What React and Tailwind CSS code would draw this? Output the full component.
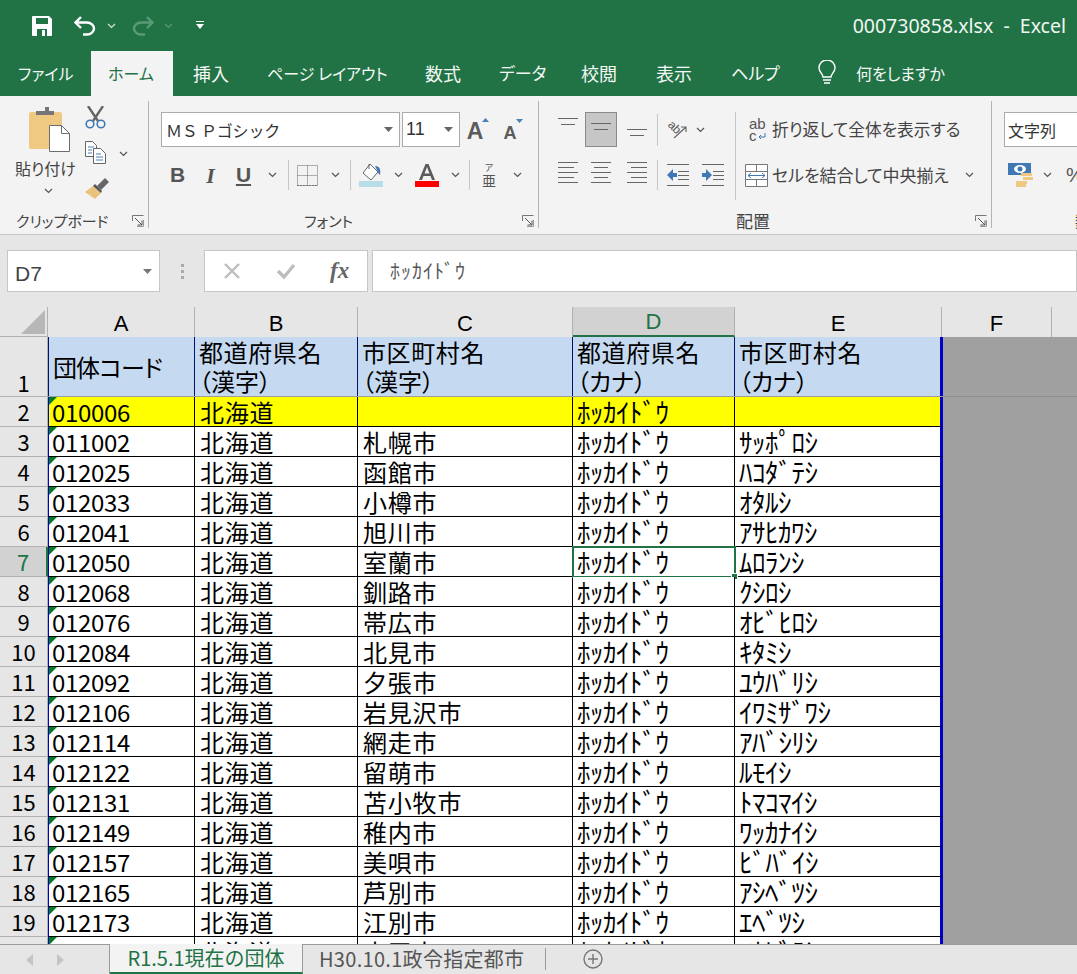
import React from "react";

const rows = [
  ["010006", "", ""],
  ["011002", "札幌市", "ｻｯﾎﾟﾛｼ"],
  ["012025", "函館市", "ﾊｺﾀﾞﾃｼ"],
  ["012033", "小樽市", "ｵﾀﾙｼ"],
  ["012041", "旭川市", "ｱｻﾋｶﾜｼ"],
  ["012050", "室蘭市", "ﾑﾛﾗﾝｼ"],
  ["012068", "釧路市", "ｸｼﾛｼ"],
  ["012076", "帯広市", "ｵﾋﾞﾋﾛｼ"],
  ["012084", "北見市", "ｷﾀﾐｼ"],
  ["012092", "夕張市", "ﾕｳﾊﾞﾘｼ"],
  ["012106", "岩見沢市", "ｲﾜﾐｻﾞﾜｼ"],
  ["012114", "網走市", "ｱﾊﾞｼﾘｼ"],
  ["012122", "留萌市", "ﾙﾓｲｼ"],
  ["012131", "苫小牧市", "ﾄﾏｺﾏｲｼ"],
  ["012149", "稚内市", "ﾜｯｶﾅｲｼ"],
  ["012157", "美唄市", "ﾋﾞﾊﾞｲｼ"],
  ["012165", "芦別市", "ｱｼﾍﾞﾂｼ"],
  ["012173", "江別市", "ｴﾍﾞﾂｼ"],
  ["012181", "赤平市", "ｱｶﾋﾞﾗｼ"],
];

const Chev = ({ className = "", color = "#555" }) => (
  <svg width="9" height="6" viewBox="0 0 9 6" className={className}>
    <path d="M1 1l3.5 3.5L8 1" fill="none" stroke={color} strokeWidth="1.2" />
  </svg>
);

const Launcher = () => (
  <svg width="12" height="12" viewBox="0 0 12 12">
    <path d="M.5 6V.5H11.500" fill="none" stroke="#777" />
    <path d="M3 3l7 7M10 5.500V10H5.500" fill="none" stroke="#555" />
    <path d="M11.500 5v6.500H5" fill="none" stroke="#999" />
  </svg>
);

const Sep = ({ className = "" }) => <div className={"w-px shrink-0 bg-[#c6c6c6] " + className} />;

const Lines = ({ widths, gap = 5, w = 20 }) => (
  <svg width={w} height={widths.length * gap + 1} viewBox={"0 0 " + w + " " + (widths.length * gap + 1)}>
    {widths.map(([a, b], i) => (
      <path key={i} d={"M" + a + " " + (i * gap + 0.5) + "H" + b} stroke="#666" />
    ))}
  </svg>
);

const Paste = () => (
  <svg width="42" height="46" viewBox="0 0 42 46">
    <rect x="0" y="5" width="33" height="37" rx="2" fill="#efc981" />
    <path d="M7 8V4h9V0h4v4h5v4z" fill="#767676" />
    <path d="M20.500 18.500h12l8 8v18h-20z" fill="#fff" stroke="#6d6d6d" />
    <path d="M32.500 18.500v8h8" fill="none" stroke="#6d6d6d" />
  </svg>
);

const Scissors = () => (
  <svg width="21" height="23" viewBox="0 0 21 23">
    <path d="M3 0l10 15M18 0L8 15" stroke="#666" strokeWidth="2.400" fill="none" />
    <circle cx="5" cy="18" r="3.800" fill="none" stroke="#3f78b5" strokeWidth="1.600" />
    <circle cx="16" cy="18" r="3.800" fill="none" stroke="#3f78b5" strokeWidth="1.600" />
  </svg>
);

const Copy = () => (
  <svg width="21" height="23" viewBox="0 0 21 23">
    <path d="M.5.5h7l4 4v11H.5z" fill="#fff" stroke="#666" />
    <path d="M8.500 7.500h7l5 5v10h-12z" fill="#fff" stroke="#666" />
    <path d="M3 6h6M3 9h4M3 12h4M11 13h5M11 16h7M11 19h7" stroke="#4a7fb8" />
  </svg>
);

const Brush = () => (
  <svg width="24" height="21" viewBox="0 0 24 21">
    <path d="M0 14l8-6 8 7-6 6-3-2-2-1 1-2-2 1z" fill="#e9c27e" />
    <path d="M8 8l2-2 7 7-1 2z" fill="#555" />
    <path d="M12 8l8-8 4 4-8 8z" fill="#666" />
  </svg>
);

const BigA = ({ size, up }) => (
  <svg width="22" height="24" viewBox="0 0 22 24">
    <text x="8" y="20.500" textAnchor="middle" fontSize={size} fontWeight="700" fill="#5b5b5b" fontFamily="Liberation Sans, sans-serif">A</text>
    <path d={up ? "M15 4l3.500-4 3.500 4z" : "M14 1h7l-3.500 4z"} fill="#4a7fb8" />
  </svg>
);

const Borders = () => (
  <svg width="21" height="21" viewBox="0 0 21 21">
    <path d="M.5.5h20v20H.5zM10.500.5v20M.5 10.500h20" fill="none" stroke="#666" strokeDasharray="1 1" />
    <path d="M0 20.500h21" stroke="#777" strokeDasharray="2 1" />
  </svg>
);

const Fill = () => (
  <svg width="24" height="24" viewBox="0 0 24 24">
    <path d="M11 1l8 8-7 8-8-7z" fill="#fff" stroke="#666" />
    <path d="M10 6V1" stroke="#666" />
    <path d="M16 3c5 0 6 4 5 9-2-1-2-4-3-5z" fill="#3f78b5" />
    <rect x="0" y="18" width="24" height="6" fill="#b7dde8" />
  </svg>
);

const FontColor = () => (
  <svg width="24" height="24" viewBox="0 0 24 24">
    <path d="M4 17L10.500 1h3L20 17h-3l-1.500-4h-7L7 17zM9.500 10.500h5L12 4z" fill="#5b5b5b" fillRule="evenodd" />
    <rect x="0" y="18" width="24" height="6" fill="#ff0000" />
  </svg>
);

const Phonetic = () => (
  <svg width="16" height="24" viewBox="0 0 16 24">
    <text x="8" y="8" textAnchor="middle" fontSize="9" fill="#555" fontFamily="Noto Sans CJK JP, sans-serif">ア</text>
    <text x="8" y="23" textAnchor="middle" fontSize="14" fill="#555" fontFamily="Noto Sans CJK JP, sans-serif">亜</text>
  </svg>
);

const Orient = () => (
  <svg width="22" height="20" viewBox="0 0 22 20">
    <g transform="rotate(45 8 8)">
      <text x="8" y="11" textAnchor="middle" fontSize="12" fill="#555" fontFamily="Liberation Sans, sans-serif">ab</text>
    </g>
    <path d="M8 18L20 7M15 7h5v5" fill="none" stroke="#666" strokeWidth="1.200" />
  </svg>
);

const Indent = ({ right }) => (
  <svg width="23" height="22" viewBox="0 0 23 22">
    <path d="M0 .5h22M0 21.500h22M11 7.500h11M11 11.500h11M11 15.500h11" stroke="#666" />
    <path d={right ? "M0 9h4V5l6 6-6 6v-4H0z" : "M10 9H6V5l-6 6 6 6v-4h4z"} fill="#3f78b5" />
  </svg>
);

const Wrap = () => (
  <svg width="20" height="24" viewBox="0 0 20 24">
    <text x="1" y="11" fontSize="15" fill="#555" fontFamily="Liberation Sans, sans-serif">ab</text>
    <text x="1" y="23" fontSize="15" fill="#555" fontFamily="Liberation Sans, sans-serif">c</text>
    <path d="M17 15v4h-6M13 17l-2 2 2 2" fill="none" stroke="#3f78b5" />
  </svg>
);

const Merge = () => (
  <svg width="23" height="23" viewBox="0 0 23 23">
    <path d="M.5.5h22v22H.5zM.5 7.500h22M.5 15.500h22M11.500.5v7M11.500 15.500v7" fill="#fff" stroke="#777" />
    <path d="M3 11.500h17M6 9l-3 2.500L6 14M17 9l3 2.500-3 2.500" fill="none" stroke="#3f78b5" />
  </svg>
);

const Currency = () => (
  <svg width="25" height="24" viewBox="0 0 25 24">
    <path d="M0 0h23v12H0z" fill="#3f78b5" />
    <ellipse cx="12" cy="6" rx="6" ry="4" fill="#fff" />
    <circle cx="12" cy="6" r="2.500" fill="#3f78b5" />
    <path d="M13 10h11v3H13zM15 14h10v3H15zM8 18h11v3H8z" fill="#efc981" />
    <path d="M8 21h10v3H8z" fill="#efc981" />
  </svg>
);

const QuickBar = () => (
  <div className="flex items-center h-[51px] bg-[#217346]">
    <svg width="20" height="20" viewBox="0 0 20 20" className="ml-[32px]">
      <path d="M0 1a1 1 0 011-1h16l3 3v16a1 1 0 01-1 1H1a1 1 0 01-1-1z" fill="#fff" />
      <rect x="4" y="2" width="12" height="6" fill="#217346" />
      <rect x="5" y="13" width="10" height="7" fill="#217346" />
      <rect x="10" y="14" width="3" height="6" fill="#fff" />
    </svg>
    <svg width="22" height="20" viewBox="0 0 22 20" className="ml-[22px]">
      <path d="M7 1L1.500 6.500 7 12" fill="none" stroke="#fff" strokeWidth="2.400" />
      <path d="M2 6.500h11c4 0 7 3 7 6s-3 6-7 6H9" fill="none" stroke="#fff" strokeWidth="2.400" />
    </svg>
    <Chev className="ml-[11px]" color="#d5e6dc" />
    <svg width="22" height="20" viewBox="0 0 22 20" className="ml-[16px]">
      <path d="M15 1l5.500 5.500L15 12" fill="none" stroke="#5a9a78" strokeWidth="2.400" />
      <path d="M20 6.500H9c-4 0-7 3-7 6s3 6 7 6h4" fill="none" stroke="#5a9a78" strokeWidth="2.400" />
    </svg>
    <Chev className="ml-[10px]" color="#5a9a78" />
    <svg width="8" height="9" viewBox="0 0 8 9" className="ml-[23px]">
      <path d="M0 .5h8" stroke="#fff" />
      <path d="M0 3h8L4 8z" fill="#fff" />
    </svg>
    <span className="ml-auto mr-[11px] text-[19.500px] leading-[26px] text-[#f1f7f3] font-['Noto_Sans','Noto_Sans_CJK_JP',sans-serif]">000730858.xlsx&nbsp; -&nbsp; Excel</span>
  </div>
);

const TabRow = () => (
  <div className="flex items-stretch h-[45px] bg-[#217346] text-[#f4f8f5] leading-[26px] [font-feature-settings:'palt']">
    <span className="ml-[18px] w-[73px] pt-[9px] text-[16px]">ファイル</span>
    <div className="w-[82px] bg-[#f3f3f3] text-[#217346] pl-[17px] pt-[9px] text-[16px]">ホーム</div>
    <span className="w-[94px] pl-[20px] pt-[9px] text-[18px]">挿入</span>
    <span className="w-[158px] pt-[9px] text-[16px]">ページ レイアウト</span>
    <span className="w-[74px] pt-[9px] text-[18px]">数式</span>
    <span className="w-[82px] pt-[9px] text-[17px]">データ</span>
    <span className="w-[75px] pt-[9px] text-[18px]">校閲</span>
    <span className="w-[75px] pt-[9px] text-[18px]">表示</span>
    <span className="w-[87px] pt-[9px] text-[17px]">ヘルプ</span>
    <svg width="18" height="25" viewBox="0 0 18 25" className="mt-[9px] mr-[20px]">
      <path d="M5 17c0-3-4-5-4-9a8 8 0 0116 0c0 4-4 6-4 9z" fill="none" stroke="#fff" strokeWidth="1.400" />
      <path d="M5 20h8M6 23h6" stroke="#fff" strokeWidth="1.600" />
    </svg>
    <span className="pt-[9px] text-[16px]">何をしますか</span>
  </div>
);

const Group = ({ label, className, labelClass = "", children }) => (
  <div className={"flex flex-col h-[127px] mt-[5px] pt-[11px] border-r border-[#b4b4b4] shrink-0 " + className}>
    <div className="h-[102px]">{children}</div>
    <div className="flex items-center h-[14px] text-[15px] leading-[14px] text-[#444]">
      <span className={labelClass}>{label}</span>
      <span className="ml-auto mr-[4px] flex"><Launcher /></span>
    </div>
  </div>
);

const Slot = ({ className = "", children }) => (
  <div className={"flex items-center justify-center shrink-0 " + className}>{children}</div>
);

const Ribbon = () => (
  <div className="flex h-[139px] bg-[#f3f3f3] border-b border-[#c8c8c8] text-[#444] overflow-hidden [font-feature-settings:'palt']">
    <Group label="クリップボード" className="w-[149px]" labelClass="ml-[16px]">
      <div className="flex h-full">
        <div className="w-[85px] flex flex-col items-center">
          <div className="ml-[14px] -mt-[5px]"><Paste /></div>
          <span className="text-[16px] mt-[3px] ml-[6px] leading-[24px]">貼り付け</span>
          <Chev className="mt-[8px] ml-[12px]" />
        </div>
        <div className="flex flex-col -mt-[6px]">
          <Scissors />
          <div className="flex items-center mt-[12px]"><Copy /><Chev className="ml-[13px] mt-[2px]" /></div>
          <div className="mt-[14px]"><Brush /></div>
        </div>
      </div>
    </Group>

    <Group label="フォント" className="w-[390px]" labelClass="ml-[155px]">
      <div className="flex items-center h-[35px] pl-[12px]">
        <div className="flex items-center w-[239px] h-[35px] bg-white border border-[#ababab] pl-[4px] pr-[6px] text-[16px] text-[#333]">
          <span className="[font-feature-settings:normal] -tracking-[0.2px]">ＭＳ Ｐゴシック</span>
          <svg width="9" height="5" viewBox="0 0 9 5" className="ml-auto"><path d="M0 0h9L4.500 5z" fill="#666" /></svg>
        </div>
        <div className="flex items-center w-[58px] h-[35px] ml-[2px] bg-white border border-[#ababab] pl-[3px] pr-[6px] text-[18px] text-[#333] font-['Liberation_Sans',sans-serif]">
          <span>11</span>
          <svg width="9" height="5" viewBox="0 0 9 5" className="ml-auto"><path d="M0 0h9L4.500 5z" fill="#666" /></svg>
        </div>
        <div className="ml-[7px]"><BigA size={23} up /></div>
        <div className="ml-[13px]"><BigA size={18} /></div>
      </div>
      <div className="flex items-center h-[30px] mt-[13px] pl-[12px] text-[#555]">
        <Slot className="w-[33px] text-[21px] font-bold font-['Liberation_Sans',sans-serif]">B</Slot>
        <Slot className="w-[33px] text-[22px] font-bold italic font-['Liberation_Serif',serif]">I</Slot>
        <Slot className="w-[33px] text-[21px] font-bold underline font-['Liberation_Sans',sans-serif]">U</Slot>
        <Slot className="w-[24px]"><Chev /></Slot>
        <Sep className="h-[30px] ml-[4px]" />
        <Slot className="w-[37px]"><Borders /></Slot>
        <Slot className="w-[18px]"><Chev /></Slot>
        <Sep className="h-[30px] ml-[6px]" />
        <Slot className="w-[40px]"><Fill /></Slot>
        <Slot className="w-[14px]"><Chev /></Slot>
        <Slot className="w-[44px]"><FontColor /></Slot>
        <Slot className="w-[12px]"><Chev /></Slot>
        <Sep className="h-[30px] ml-[8px]" />
        <Slot className="w-[38px]"><Phonetic /></Slot>
        <Slot className="w-[18px]"><Chev /></Slot>
      </div>
    </Group>

    <Group label="配置" className="w-[453px]" labelClass="ml-[197px] text-[17px]">
      <div className="flex h-[98px]">
        <div className="w-[118px] pl-[12px] shrink-0">
          <div className="flex items-center h-[35px]">
            <Slot className="w-[34px] h-[35px] items-start pt-[6px]"><Lines widths={[[0, 20], [3, 17]]} gap={6} /></Slot>
            <Slot className="w-[32px] h-[35px] bg-[#c6c6c6] border border-[#8a8a8a]"><Lines widths={[[0, 20], [3, 17]]} gap={6} /></Slot>
            <Slot className="w-[40px] h-[35px] items-end pb-[5px]"><Lines widths={[[0, 20], [3, 17]]} gap={6} /></Slot>
            <Sep className="h-[32px]" />
          </div>
          <div className="flex items-center h-[30px] mt-[13px]">
            <Slot className="w-[34px]"><Lines widths={[[0, 20], [0, 16], [0, 20], [0, 16], [0, 20]]} /></Slot>
            <Slot className="w-[32px]"><Lines widths={[[0, 20], [3, 17], [0, 20], [3, 17], [0, 20]]} /></Slot>
            <Slot className="w-[40px]"><Lines widths={[[0, 20], [4, 20], [0, 20], [4, 20], [0, 20]]} /></Slot>
            <Sep className="h-[30px]" />
          </div>
        </div>
        <div className="w-[78px] shrink-0">
          <div className="flex items-center h-[35px] pl-[9px]"><Orient /><Chev className="ml-[8px]" /></div>
          <div className="flex items-center h-[30px] mt-[13px] pl-[10px]"><Indent /><span className="w-[12px]" /><Indent right /></div>
        </div>
        <Sep className="h-[88px]" />
        <div className="pl-[9px]">
          <div className="flex items-center h-[35px] text-[16.700px]">
            <span className="ml-[3px] mr-[4px] flex"><Wrap /></span>
            <span>折り返して全体を表示する</span>
          </div>
          <div className="flex items-center h-[30px] mt-[13px] text-[17px]">
            <Merge />
            <span className="ml-[4px] -tracking-[0.1px]">セルを結合して中央揃え</span>
            <Chev className="ml-[16px]" />
          </div>
        </div>
      </div>
    </Group>

    <div className="flex flex-col h-[127px] mt-[5px] pt-[11px] pl-[12px] shrink-0 w-[120px]">
      <div className="flex items-center h-[35px] w-[120px] bg-white border border-[#ababab] pl-[3px] text-[16px] text-[#333]">文字列</div>
      <div className="flex items-center h-[30px] mt-[13px] pl-[4px]">
        <Currency />
        <Chev className="ml-[10px]" />
        <span className="ml-[14px] text-[20px] text-[#555] font-['Liberation_Sans',sans-serif]">%</span>
      </div>
      <div className="flex items-center h-[14px] mt-[24px] ml-[71px] text-[15px]">数値</div>
    </div>
  </div>
);

const FormulaBar = () => (
  <div className="flex items-center h-[72px] bg-[#e6e6e6]">
    <div className="flex items-center w-[153px] h-[42px] ml-[7px] bg-white border border-[#c6c6c6] pl-[7px] pr-[7px] text-[21px] text-[#444] font-['Liberation_Sans',sans-serif]">
      <span className="mt-[5px] leading-[28px]">D7</span>
      <svg width="9" height="5" viewBox="0 0 9 5" className="ml-auto"><path d="M0 0h9L4.500 5z" fill="#777" /></svg>
    </div>
    <div className="flex flex-col gap-[3px] w-[44px] items-center">
      <span className="w-[3px] h-[3px] bg-[#aaa]" />
      <span className="w-[3px] h-[3px] bg-[#aaa]" />
      <span className="w-[3px] h-[3px] bg-[#aaa]" />
    </div>
    <div className="flex items-center w-[164px] h-[42px] bg-white border border-[#c6c6c6] pl-[18px]">
      <svg width="18" height="18" viewBox="0 0 18 18"><path d="M2 2l14 14M16 2L2 16" stroke="#bdbdbd" strokeWidth="2.400" /></svg>
      <svg width="20" height="18" viewBox="0 0 20 18" className="ml-[35px]"><path d="M2 9l6 6L18 3" fill="none" stroke="#bdbdbd" strokeWidth="3.400" /></svg>
      <span className="ml-[34px] text-[23px] font-bold italic text-[#666] font-['Liberation_Serif',serif]">fx</span>
    </div>
    <div className="flex items-center flex-1 h-[42px] ml-[4px] bg-white border border-[#c6c6c6] pl-[17px] text-[20px] tracking-[1px] text-[#555]">ﾎｯｶｲﾄﾞｳ</div>
  </div>
);

const ColHead = ({ className, active, children }) => (
  <div className={"flex items-end justify-center h-[30px] shrink-0 border-r border-[#b1b1b1] text-[22px] leading-[26px] font-['Liberation_Sans',sans-serif] " + (active ? "bg-[#d2d2d2] text-[#217346] border-b-2 border-b-[#217346] " : "text-black ") + className}>
    {children}
  </div>
);

const ColumnHeaders = () => (
  <div className="flex h-[30px] bg-[#e6e6e6] shrink-0">
    <div className="relative w-[48px] shrink-0 border-r border-[#b1b1b1] border-b">
      <svg width="24" height="24" viewBox="0 0 24 24" className="absolute right-[2px] bottom-[2px]"><path d="M24 0v24H0z" fill="#b7b7b7" /></svg>
    </div>
    <ColHead className="w-[147px]">A</ColHead>
    <ColHead className="w-[163px]">B</ColHead>
    <ColHead className="w-[215px]">C</ColHead>
    <ColHead className="w-[162px]" active>D</ColHead>
    <ColHead className="w-[207px]">E</ColHead>
    <ColHead className="w-[110px]">F</ColHead>
  </div>
);

const RowHead = ({ n, active }) => (
  <div className={"flex items-center justify-center w-[48px] shrink-0 h-[30px] border-b border-[#b1b1b1] text-[22px] leading-[29px] " + (active ? "bg-[#d2d2d2] text-[#217346] border-r-2 border-r-[#217346]" : "bg-[#e6e6e6] text-black border-r border-r-[#b1b1b1]")}>
    {n}
  </div>
);

const Triangle = () => (
  <span className="absolute top-0 left-0 w-0 h-0 border-t-[8px] border-r-[8px] border-t-[#007a1e] border-r-transparent" />
);

const HeadCell = ({ top, bottom, w }) => (
  <div className={"flex flex-col pl-[4px] leading-[29px] border-r border-[#00146e] " + w}>
    <span className="tracking-[0.6px]">{top}</span>
    <span>{bottom}</span>
  </div>
);

const HeaderRow = () => (
  <div className="flex h-[60px] shrink-0">
    <div className="flex items-end justify-center w-[48px] shrink-0 bg-[#e6e6e6] border-b border-r border-[#b1b1b1] text-[22px] leading-[28px]">1</div>
    <div className="flex w-[895px] shrink-0 bg-[#c5d9f1] border-b border-[#9e9e9e] text-[24px] text-black">
      <div className="flex items-center w-[147px] pl-[4px] border-l border-r border-[#00146e] -tracking-[0.9px]">団体コード</div>
      <HeadCell top="都道府県名" bottom="（漢字）" w="w-[163px]" />
      <HeadCell top="市区町村名" bottom="（漢字）" w="w-[215px]" />
      <HeadCell top="都道府県名" bottom="（カナ）" w="w-[162px]" />
      <div className="flex flex-col pl-[4px] w-[208px] leading-[29px] border-r-[3px] border-[#0000cc]">
        <span className="tracking-[0.6px]">市区町村名</span>
        <span>（カナ）</span>
      </div>
    </div>
    <div className="flex-1 bg-[#a0a0a0] border-b border-[#909090]" />
  </div>
);

const DataRow = ({ row, n }) => {
  const selected = n === 7;
  const bg = n === 2 ? "bg-[#ffff00]" : "bg-white";
  const cell = "flex items-center border-r border-b border-black " + bg + " ";
  const kana = "text-[27px] -tracking-[0.5px] ";
  return (
    <div className="flex h-[30px] shrink-0">
      <RowHead n={n} active={selected} />
      <div className="flex w-[895px] shrink-0 text-[24px] leading-[29px] text-black">
        <div className={cell + "relative w-[147px] pl-[3px] border-l border-l-[#0000cc] -tracking-[0.3px]"}>
          <Triangle />
          {row[0]}
        </div>
        <div className={cell + "w-[163px] pl-[5px] tracking-[0.8px]"}>北海道</div>
        <div className={cell + "w-[215px] pl-[5px] tracking-[0.8px]"}>{row[1]}</div>
        <div className={cell + kana + "relative w-[162px] pl-[4px]"}>
          ﾎｯｶｲﾄﾞｳ
          {selected && (
            <span className="absolute -left-px -top-px w-[164px] h-[32px] border-2 border-[#217346]">
              <span className="absolute -right-[4px] -bottom-[4px] w-[7px] h-[7px] bg-[#217346] border border-white" />
            </span>
          )}
        </div>
        <div className={cell + kana + "w-[208px] pl-[4px] border-r-[3px] border-r-[#0000cc]"}>{row[2]}</div>
      </div>
      <div className="flex-1 bg-[#a0a0a0]" />
    </div>
  );
};

const SheetTabs = () => (
  <div className="flex items-stretch h-[30px] shrink-0 bg-[#e6e6e6] border-t border-[#9a9a9a] text-[20px] leading-[26px]">
    <div className="flex items-center w-[110px] pl-[26px] gap-[24px] border-r border-[#9a9a9a]">
      <svg width="7" height="12" viewBox="0 0 7 12"><path d="M7 0v12L0 6z" fill="#c4c4c4" /></svg>
      <svg width="7" height="12" viewBox="0 0 7 12"><path d="M0 0v12l7-6z" fill="#c4c4c4" /></svg>
    </div>
    <div className="flex items-center justify-center w-[193px] -mt-px bg-[#f3f3f3] text-[#217346] border-r border-[#9a9a9a] border-b-2 border-b-[#217346]">R1.5.1現在の団体</div>
    <div className="flex items-center pl-[16px] pb-[2px] w-[242px] text-[#555] tracking-[0.3px]">H30.10.1政令指定都市</div>
    <div className="w-px h-[22px] mt-[3px] bg-[#9a9a9a]" />
    <svg width="20" height="20" viewBox="0 0 20 20" className="ml-[37px] mt-[4px]">
      <circle cx="10" cy="10" r="9" fill="none" stroke="#777" strokeWidth="1.400" />
      <path d="M10 5v10M5 10h10" stroke="#777" strokeWidth="1.400" />
    </svg>
  </div>
);

export default function App() {
  return (
    <div className="flex flex-col w-[1077px] h-[974px] overflow-hidden bg-white font-['Noto_Sans_CJK_JP','Noto_Sans',sans-serif]">
      <QuickBar />
      <TabRow />
      <Ribbon />
      <FormulaBar />
      <ColumnHeaders />
      <div className="flex flex-col flex-1 min-h-0 overflow-hidden [font-feature-settings:'palt']">
        <HeaderRow />
        {rows.map((row, i) => <DataRow key={row[0]} row={row} n={i + 2} />)}
      </div>
      <SheetTabs />
    </div>
  );
}
